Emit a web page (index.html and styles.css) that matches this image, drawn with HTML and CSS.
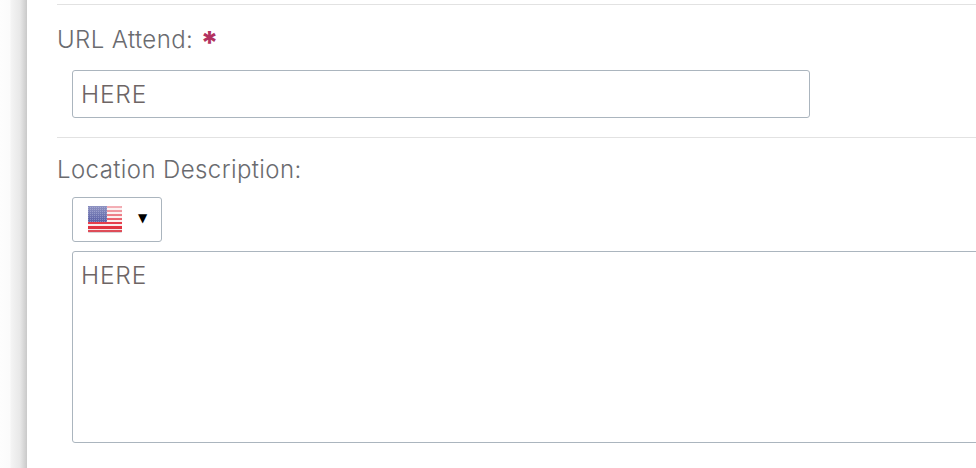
FILE: index.html
```html
<!DOCTYPE html>
<html lang="en">
<head>
  <meta charset="UTF-8" />
  <meta name="viewport" content="width=device-width, initial-scale=1.0"/>
  <title>Location</title>
  <link rel="stylesheet" href="styles.css">
</head>
<body>
  <div class="page">
    <div class="gutter"></div>
    <main class="content">
      <div class="form-group first">
        <label class="field-label">URL Attend: <span class="required">*</span></label>
        <div class="field">
          <input class="text-input" type="text" value="HERE" />
        </div>
      </div>

      <div class="form-group">
        <label class="field-label">Location Description:</label>
        <div class="field">
          <button class="lang-btn" type="button">
            <svg class="flag" width="36" height="30" viewBox="0 0 36 30" aria-hidden="true">
              <defs>
                <linearGradient id="shine" x1="0" y1="0" x2="0" y2="1">
                  <stop offset="0" stop-color="#fff" stop-opacity="0.3"/>
                  <stop offset="0.55" stop-color="#fff" stop-opacity="0"/>
                  <stop offset="1" stop-color="#000" stop-opacity="0.05"/>
                </linearGradient>
                <pattern id="stars" width="2" height="2" patternUnits="userSpaceOnUse">
                  <rect width="2" height="2" fill="#5f65a8"/>
                  <rect x="1" y="1" width="1" height="1" fill="#858ac0"/>
                </pattern>
                <filter id="soft" x="-10%" y="-10%" width="120%" height="120%">
                  <feGaussianBlur stdDeviation="0.55"/>
                </filter>
              </defs>
              <g filter="url(#soft)">
                <rect x="1" y="2" width="34" height="27" rx="1" fill="#d9d4d8"/>
                <rect x="1" y="2" width="34" height="26" rx="1" fill="#fbeeee"/>
                <rect x="1" y="2" width="34" height="2" fill="#ee8f98"/>
                <rect x="1" y="6" width="34" height="2" fill="#ec7f89"/>
                <rect x="1" y="10" width="34" height="2" fill="#ea6f7a"/>
                <rect x="1" y="14" width="34" height="2" fill="#e95f6b"/>
                <rect x="1" y="18" width="34" height="2" fill="#e63c4b"/>
                <rect x="1" y="22" width="34" height="3" fill="#e52f3e"/>
                <rect x="1" y="26" width="34" height="2" fill="#e8505c"/>
                <rect x="1" y="2" width="19" height="16" fill="url(#stars)"/>
                <rect x="1" y="2" width="34" height="26" rx="1" fill="url(#shine)"/>
              </g>
            </svg>
            <span class="caret">▼</span>
          </button>
          <textarea class="text-area">HERE</textarea>
        </div>
      </div>
    </main>
  </div>
</body>
</html>
```

FILE: styles.css
```css
body {
  margin: 0;
  padding: 0;
  background: #fff;
  font-family: "Inter", "Open Sans", sans-serif;
}

.page {
  display: flex;
  height: 468px;
  overflow: hidden;
}

.gutter {
  flex: 0 0 27px;
  background: linear-gradient(to right, #fdfdfd 0, #fbfbfb 10px, #f4f4f4 11px, #e8e8e8 20px, #c9c9c9 27px);
}

.content {
  flex: 1;
  min-width: 0;
  padding-left: 30px;
}

.form-group {
  border-top: 1px solid #e2e2e2;
  padding-top: 18px;
  padding-bottom: 19px;
  width: 1000px;
}

.form-group.first {
  margin-top: 4px;
  padding-top: 21px;
}

.field-label {
  display: block;
  font-size: 24px;
  font-weight: 300;
  line-height: 28px;
  color: #6a6b6f;
  letter-spacing: 0.4px;
}

.required {
  display: inline-block;
  height: 28px;
  margin-left: 0;
  font-size: 31px;
  font-weight: 800;
  line-height: 34px;
  letter-spacing: 0;
  color: #b2325f;
  vertical-align: top;
}

.field {
  padding-left: 15px;
  margin-top: 16px;
}

.form-group + .form-group .field {
  margin-top: 13px;
}

.text-input,
.text-area {
  display: block;
  box-sizing: border-box;
  border: 1px solid #abb5be;
  border-radius: 3px;
  padding: 0 8px;
  margin: 0;
  font-family: "Inter", "Open Sans", sans-serif;
  font-size: 24.5px;
  font-weight: 300;
  letter-spacing: 0.8px;
  color: #6d6565;
  background: #fff;
  outline: none;
}

.text-input {
  width: 738px;
  height: 48px;
}

.text-area {
  width: 940px;
  height: 192px;
  padding-top: 9px;
  resize: none;
  line-height: 28px;
}

.lang-btn {
  display: flex;
  align-items: flex-start;
  box-sizing: border-box;
  width: 90px;
  height: 45px;
  margin-bottom: 9px;
  padding: 6px 0 0 14px;
  border: 1px solid #abb5be;
  border-radius: 3px;
  background: #fff;
}

.flag {
  display: block;
}

.caret {
  margin-left: 15px;
  margin-top: 4px;
  font-family: "DejaVu Sans", sans-serif;
  font-size: 12px;
  line-height: 20px;
  color: #000;
}
```
